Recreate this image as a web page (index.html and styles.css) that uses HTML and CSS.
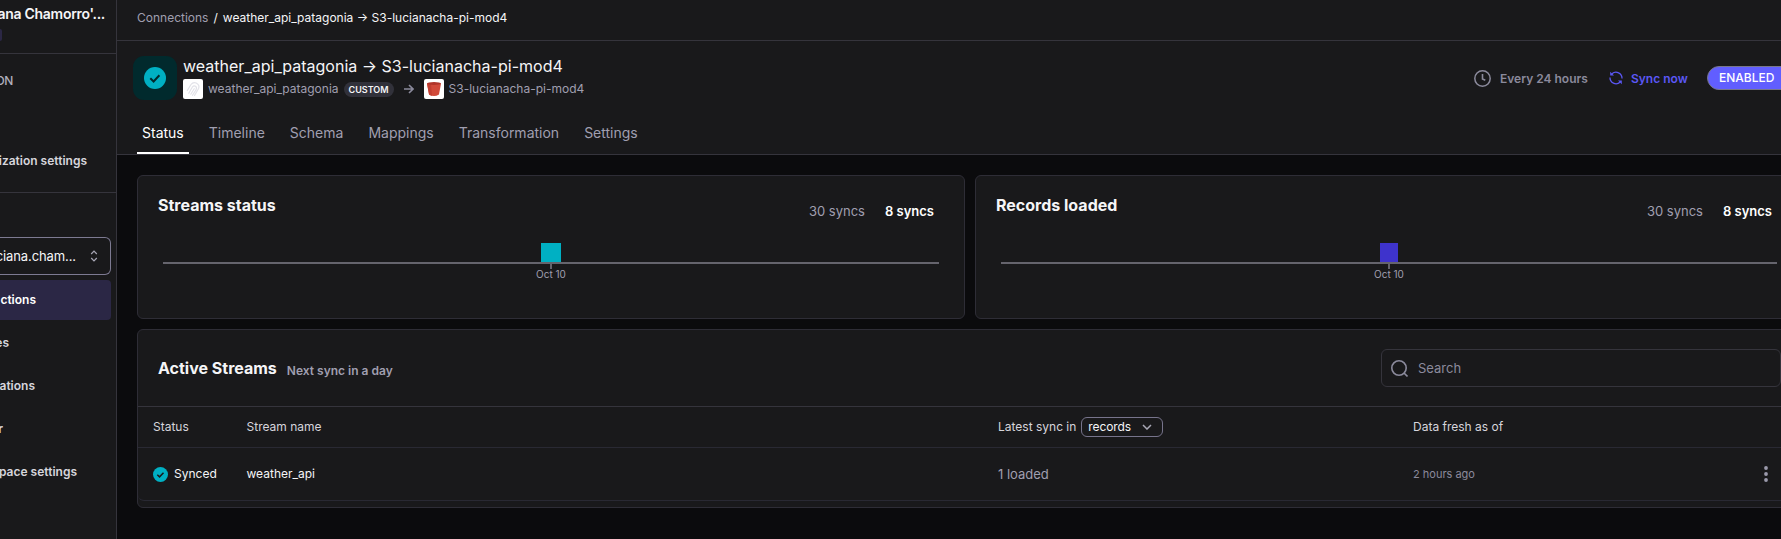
FILE: index.html
```html
<!DOCTYPE html>
<html lang="en">
<head>
<meta charset="utf-8">
<title>Connection status</title>
<link rel="stylesheet" href="styles.css">
</head>
<body>
<div class="app">
  <aside class="sidebar">
    <div class="org">
      <div class="label org-name">ana Chamorro'...</div>
      <span class="org-chip"></span>
    </div>
    <div class="org-nav">
      <div class="label section">ON</div>
      <div class="label org-settings">ization settings</div>
    </div>
    <div class="workspace">
      <div class="picker">
        <span class="label picker-text">ciana.cham...</span>
        <svg width="8" height="12" viewBox="0 0 8 12"><path d="M1.2 4 4 1.2 6.8 4M1.2 8 4 10.8 6.8 8"/></svg>
      </div>
      <nav class="menu">
        <div class="item active"><span class="label w-36">ctions</span></div>
        <div class="item"><span class="label w-9">es</span></div>
        <div class="item"><span class="label w-35">ations</span></div>
        <div class="item"><span class="label w-3">r</span></div>
        <div class="item"><span class="label w-77">pace settings</span></div>
      </nav>
    </div>
  </aside>
  <main class="main">
    <div class="crumbs"><span class="muted">Connections</span><span class="slash">/</span><span>weather_api_patagonia → S3-lucianacha-pi-mod4</span></div>
    <header class="header">
      <div class="head-row">
        <div class="tile">
          <svg width="22" height="22" viewBox="0 0 22 22"><circle cx="11" cy="11" r="11" fill="#00b0c3"/><path d="m6.3 11.3 3.3 3.2 5.8-6.2" fill="none" stroke="#012a2d" stroke-width="2"/></svg>
        </div>
        <div class="names">
          <h1 class="title">weather_api_patagonia → S3-lucianacha-pi-mod4</h1>
          <div class="sub">
            <svg class="logo" width="20" height="20" viewBox="0 0 20 20"><rect width="20" height="20" rx="2" fill="#fff"/><path d="M4.300 11.500 8 5.500Q10 2.800 13.200 4Q17 6 15.600 9.500L11.500 16.500M5.800 14.300 9.500 7.800Q11 6 12.900 7.500Q14.200 9 13 10.800L9.500 16.300M7.800 15.200 11.200 9.700" fill="none" stroke="#e2e2e8" stroke-width="1.200" stroke-linecap="round"/></svg>
            <span class="source">weather_api_patagonia</span>
            <span class="badge">CUSTOM</span>
            <svg class="arrow" width="10" height="10" viewBox="0 0 10 10"><path d="M0 5H9M5 1l4 4-4 4" fill="none" stroke="#8b8a9c" stroke-width="1.6"/></svg>
            <svg class="logo" width="20" height="20" viewBox="0 0 20 20"><rect width="20" height="20" rx="2" fill="#fff"/><path d="M3 4.500 5 15.500Q10 18.500 15 15.500L17 4.500Z" fill="#d14a3a"/><path d="M3 4.500 5 15.500Q6 16.500 8 16.800L7 5Z" fill="#c23f32"/><ellipse cx="10" cy="4.500" rx="7" ry="1.500" fill="#b0352a"/></svg>
            <span class="dest">S3-lucianacha-pi-mod4</span>
          </div>
        </div>
        <div class="actions">
          <svg width="17" height="17" viewBox="0 0 17 17" fill="none" stroke="#8b8a9c"><circle cx="8.500" cy="8.500" r="7.700" stroke-width="1.500"/><path d="M8.500 4V9L11.300 10.300" stroke-width="1.600"/></svg>
          <span class="every">Every 24 hours</span>
          <svg class="sync-icon" width="14" height="14" viewBox="0 0 14 14" fill="none" stroke="#5b57f5" stroke-width="1.300"><path d="M3 2.800A6 6 0 0 1 13 7.500M11 11.200A6 6 0 0 1 1 6.500"/><path d="M1.200.800V4.600H5ZM12.800 13.200V9.400H9Z" fill="#5b57f5" stroke="none"/></svg>
          <span class="sync">Sync now</span>
          <span class="enabled">ENABLED</span>
        </div>
      </div>
      <nav class="tabs">
        <span class="tab on">Status</span><span class="tab">Timeline</span><span class="tab">Schema</span><span class="tab">Mappings</span><span class="tab">Transformation</span><span class="tab">Settings</span>
      </nav>
    </header>
    <div class="content">
      <div class="charts">
        <section class="card chart">
          <div class="chart-head"><h2>Streams status</h2><div class="legend"><span>30 syncs</span><b>8 syncs</b></div></div>
          <div class="plot"><i class="bar teal"></i><i class="axis"></i><i class="tick"></i><span>Oct 10</span></div>
        </section>
        <section class="card chart">
          <div class="chart-head"><h2>Records loaded</h2><div class="legend"><span>30 syncs</span><b>8 syncs</b></div></div>
          <div class="plot"><i class="bar blue"></i><i class="axis"></i><i class="tick"></i><span>Oct 10</span></div>
        </section>
      </div>
      <section class="card streams">
        <div class="streams-head">
          <h2>Active Streams</h2><span class="next">Next sync in a day</span>
          <div class="search"><svg width="17" height="17" viewBox="0 0 17 17" fill="none" stroke="#8b8a9c" stroke-width="1.600"><circle cx="8" cy="8" r="7.200"/><path d="m13 13 3.500 3.500"/></svg><span>Search</span></div>
        </div>
        <div class="row head">
          <span>Status</span><span>Stream name</span>
          <span class="latest">Latest sync in<span class="select">records<svg width="10" height="6" viewBox="0 0 10 6"><path d="m1 1 4 4 4-4" fill="none" stroke="#a8a7b5" stroke-width="1.500"/></svg></span></span>
          <span>Data fresh as of</span>
        </div>
        <div class="row body">
          <span class="state"><svg width="15" height="15" viewBox="0 0 22 22"><circle cx="11" cy="11" r="11" fill="#00b0c3"/><path d="m6.300 11.300 3.300 3.200 5.800-6.200" fill="none" stroke="#19191b" stroke-width="2.200"/></svg>Synced</span>
          <span>weather_api</span><span class="loaded">1 loaded</span><span class="ago">2 hours ago</span>
          <svg width="4" height="16" viewBox="0 0 4 16" fill="#9b9aac"><circle cx="2" cy="2" r="1.900"/><circle cx="2" cy="8" r="1.900"/><circle cx="2" cy="14" r="1.900"/></svg>
        </div>
      </section>
    </div>
  </main>
</div>
</body>
</html>
```
FILE: styles.css
```css
* { box-sizing: border-box; }
body { margin: 0; background: #0b0b0d; color: #f5f5f7; font: 12px/16px Inter, sans-serif; overflow: hidden; }
svg { display: block; flex: none; }
h1, h2 { margin: 0; }
.app { display: flex; width: 1823px; height: 539px; overflow: hidden; }
.sidebar { width: 117px; flex: none; background: #19191b; border-right: 1px solid #35343c; }
.label { display: flex; justify-content: flex-end; white-space: nowrap; }
.org { height: 54px; border-bottom: 1px solid #35343c; padding-top: 4px; }
.org-name { width: 105px; font-size: 14px; line-height: 20px; font-weight: 600; letter-spacing: -0.3px; }
.org-chip { display: block; width: 2px; height: 12px; margin-top: 5px; background: #2b2745; border-radius: 0 6px 6px 0; }
.org-nav { height: 139px; border-bottom: 1px solid #35343c; padding-top: 19px; }
.section { width: 13px; color: #b0afbd; font-weight: 500; line-height: 16px; letter-spacing: -0.4px; }
.org-settings { width: 87px; margin-top: 64px; font-weight: 600; color: #d6d5dc; }
.workspace { padding-top: 44px; }
.picker { width: 111px; height: 38px; border: 1px solid #7d7a92; border-left: 0; border-radius: 0 6px 6px 0; display: flex; align-items: center; }
.picker svg { margin-left: 14px; fill: none; stroke: #a8a7b5; stroke-width: 1.2; }
.picker-text { width: 76px; font-size: 13px; letter-spacing: -0.1px; }
.menu { padding-top: 5px; display: grid; gap: 3px; }
.item { width: 111px; height: 40px; display: flex; align-items: center; font-weight: 600; color: #d6d5dc; }
.active { background: #2b2745; color: #fff; border-radius: 0 4px 4px 0; }
.w-36 { width: 36px; } .w-9 { width: 9px; } .w-35 { width: 35px; } .w-3 { width: 3px; } .w-77 { width: 77px; }
.main { flex: 1; min-width: 0; }
.crumbs { height: 41px; background: #19191b; border-bottom: 1px solid #35343c; padding: 10px 20px; display: flex; }
.muted { color: #a09fb0; }
.slash { margin: 0 5px; }
.header { height: 114px; background: #19191b; border-bottom: 1px solid #35343c; padding: 15px 0 0 16px; display: flex; flex-direction: column; justify-content: space-between; }
.head-row { display: flex; align-items: flex-start; height: 44px; }
.tile { width: 44px; height: 44px; border-radius: 11px; background: #012a2d; display: grid; place-items: center; }
.names { margin-left: 6px; }
.title { font-size: 16px; line-height: 20px; font-weight: 400; height: 23px; letter-spacing: 0.01px; }
.sub { display: flex; align-items: center; color: #a09fb0; height: 20px; }
.source, .dest { margin-left: 5px; }
.badge { margin: 1px 0 0 5px; height: 15px; width: 50px; border-radius: 8px; background: #31313a; color: #f5f5f7; font-size: 9px; line-height: 15px; font-weight: 600; text-align: center; }
.arrow { margin: 0 10px; }
.actions { margin-left: auto; width: 349px; height: 44px; display: flex; align-items: center; font-weight: 600; white-space: nowrap; }
.every { color: #8b8a9c; margin: 1px 0 0 9px; width: 109px; }
.sync { color: #5b57f5; margin: 1px 0 0 8px; width: 76px; }
.enabled { width: 100px; height: 24px; border: 1px solid #77768a; border-radius: 12px; background: #615eff; color: #fff; line-height: 22px; padding-left: 11px; font-weight: 500; }
.tabs { margin-left: 4px; display: flex; gap: 15px; font-size: 14px; color: #a09fb0; }
.tab { padding: 0 5px; height: 31px; line-height: 20px; }
.on { color: #fff; border-bottom: 2px solid #fff; }
.content { padding: 20px; }
.card { background: #19191b; border: 1px solid #2e2d36; border-radius: 6px; }
.charts { display: flex; gap: 10px; }
.chart { width: 828px; height: 144px; padding: 19px 25px 0; flex: none; }
h2 { font-size: 16px; line-height: 20px; font-weight: 700; }
.chart-head { display: flex; justify-content: space-between; height: 48px; margin-left: -5px; }
.legend { display: flex; gap: 20px; font-size: 13px; line-height: 20px; padding: 6px 5px 0 0; color: #a09fb0; }
.legend b { font-weight: 600; color: #fff; }
.plot { display: flex; flex-direction: column; align-items: center; color: #a09fb0; font-size: 10px; line-height: 11px; }
.bar { width: 20px; height: 19px; }
.teal { background: #00b0c3; }
.blue { background: #3e33cc; width: 18px; }
.axis { width: 776px; height: 2px; background: #65646d; }
.tick { width: 2px; height: 5px; background: #65646d; }
.streams { margin-top: 10px; height: 179px; width: 1666px; }
.streams-head { height: 77px; border-bottom: 1px solid #35343c; display: flex; align-items: center; padding-left: 20px; }
.next { margin: 5px 0 0 10px; color: #a09fb0; font-weight: 600; }
.search { margin: 0 21px 0 auto; width: 400px; height: 38px; border: 1px solid #35343c; border-radius: 6px; display: flex; align-items: center; padding-left: 9px; color: #8b8a9c; font-size: 13px; gap: 10px; }
.row { display: grid; grid-template-columns: 93.5px 751.5px 415px 351px 1fr; align-items: center; padding-left: 15px; border-bottom: 1px solid #292933; }
.head { height: 41px; color: #d6d5dc; }
.body { height: 53px; border-radius: 0 0 6px 6px; }
.latest { display: flex; align-items: center; }
.select { margin-left: 5px; width: 82px; height: 20px; border: 1px solid #77748c; border-radius: 6px; display: flex; align-items: center; justify-content: space-between; padding: 0 10px 0 6px; color: #f5f5f7; letter-spacing: -0.1px; }
.state { display: flex; align-items: center; gap: 6px; }
.loaded { color: #a09fb0; font-size: 13px; }
.ago { color: #8b8a9c; font-size: 11px; }
```
